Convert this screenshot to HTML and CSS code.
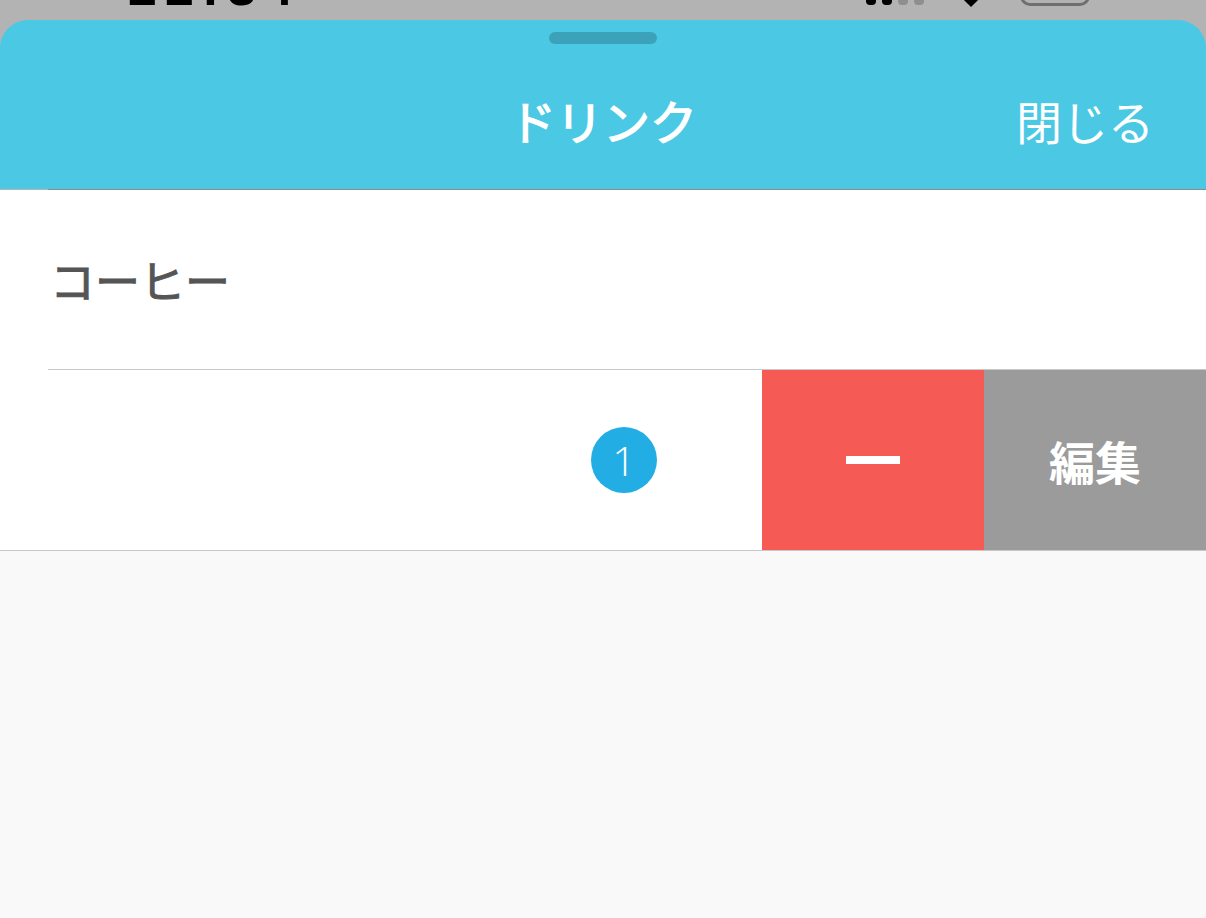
FILE: index.html
```html
<!DOCTYPE html>
<html lang="ja">
<head>
<meta charset="utf-8">
<title>ドリンク</title>
<link rel="stylesheet" href="styles.css">
</head>
<body>
<div class="top">
  <div class="status">
    <span class="time">22:34</span>
    <div class="spacer"></div>
    <div class="signal">
      <span class="bar on"></span><span class="bar on"></span><span class="bar off"></span><span class="bar off"></span>
    </div>
    <span class="wifi"></span>
    <span class="battery"></span>
  </div>
  <header class="sheet-header">
    <div class="handle"></div>
    <div class="title-row">
      <div class="side"></div>
      <h1 class="title">ドリンク</h1>
      <div class="side right"><span class="close">閉じる</span></div>
    </div>
  </header>
</div>
<div class="header-line"></div>
<main class="list">
  <div class="row name-row"><span class="item-name">コーヒー</span></div>
  <div class="sep"></div>
  <div class="row action-row">
    <div class="count-area"><span class="badge">1</span></div>
    <div class="btn minus"><span class="minus-bar"></span></div>
    <div class="btn edit">編集</div>
  </div>
</main>
</body>
</html>
```

FILE: styles.css
```css
html, body {
  margin: 0;
  padding: 0;
}
body {
  background: #f9f9f9;
  font-family: "Noto Sans CJK JP", "Noto Sans", sans-serif;
  width: 1206px;
  height: 918px;
  overflow: hidden;
}
.top {
  background: #b3b3b3;
}
.status {
  height: 20px;
  box-sizing: border-box;
  padding: 0 116px 15px 128px;
  display: flex;
  align-items: flex-end;
  overflow: hidden;
}
.time {
  font-family: "Liberation Sans", sans-serif;
  font-weight: 700;
  font-size: 52px;
  line-height: 1;
  letter-spacing: 8px;
  color: #000;
  margin-bottom: -8px;
}
.spacer {
  flex: 1;
}
.signal {
  display: flex;
  align-items: flex-end;
  gap: 6px;
  margin-right: 42px;
}
.bar {
  width: 10px;
  height: 20px;
  border-radius: 4px;
}
.bar.on { background: #000; }
.bar.off { background: #8e8e8e; }
.wifi {
  width: 10px;
  height: 10px;
  background: #000;
  transform: rotate(45deg);
  margin-right: 44px;
}
.battery {
  width: 70px;
  height: 30px;
  box-sizing: border-box;
  border: 3px solid #6f6f6f;
  border-radius: 10px;
  margin-bottom: -1px;
}
.sheet-header {
  background: #4bc8e4;
  border-radius: 28px 28px 0 0;
  height: 169px;
  box-sizing: border-box;
  padding-top: 12px;
  display: flex;
  flex-direction: column;
  align-items: center;
}
.handle {
  width: 108px;
  height: 12px;
  border-radius: 6px;
  background: #3ca2ba;
}
.title-row {
  margin-top: 44px;
  height: 64px;
  width: 100%;
  box-sizing: border-box;
  padding: 0 52px;
  display: flex;
  align-items: center;
}
.side {
  flex: 1;
  display: flex;
}
.side.right {
  justify-content: flex-end;
}
.title {
  margin: 0;
  font-size: 47px;
  font-weight: 400;
  -webkit-text-stroke: 1.3px #fff;
  color: #fff;
  line-height: 64px;
}
.close {
  font-size: 46px;
  font-weight: 400;
  color: #fff;
  line-height: 64px;
}
.header-line {
  height: 1px;
  background: linear-gradient(to right, #b3b3b3 48px, #8c8c8c 48px);
}
.list {
  background: #fff;
  border-bottom: 1px solid #c8c8c8;
}
.row {
  display: flex;
  align-items: center;
}
.name-row {
  height: 179px;
  padding-left: 50px;
}
.item-name {
  font-size: 45px;
  font-weight: 400;
  -webkit-text-stroke: 1px #555;
  color: #555;
  line-height: 1;
}
.sep {
  margin-left: 48px;
  height: 1px;
  background: #c8c8c8;
}
.action-row {
  height: 180px;
  align-items: stretch;
}
.count-area {
  flex: 1;
  display: flex;
  align-items: center;
  justify-content: flex-end;
  padding-right: 105px;
}
.badge {
  width: 66px;
  height: 66px;
  border-radius: 50%;
  background: #22aee4;
  color: #fff;
  font-family: "Open Sans", "Noto Sans", sans-serif;
  font-size: 41px;
  font-weight: 300;
  display: flex;
  align-items: center;
  justify-content: center;
  line-height: 1;
}
.btn {
  width: 222px;
  display: flex;
  align-items: center;
  justify-content: center;
  color: #fff;
}
.minus {
  background: #f55a54;
}
.minus-bar {
  width: 54px;
  height: 8px;
  background: #fff;
}
.edit {
  background: #9b9b9b;
  font-size: 46px;
  font-weight: 700;
}
```
